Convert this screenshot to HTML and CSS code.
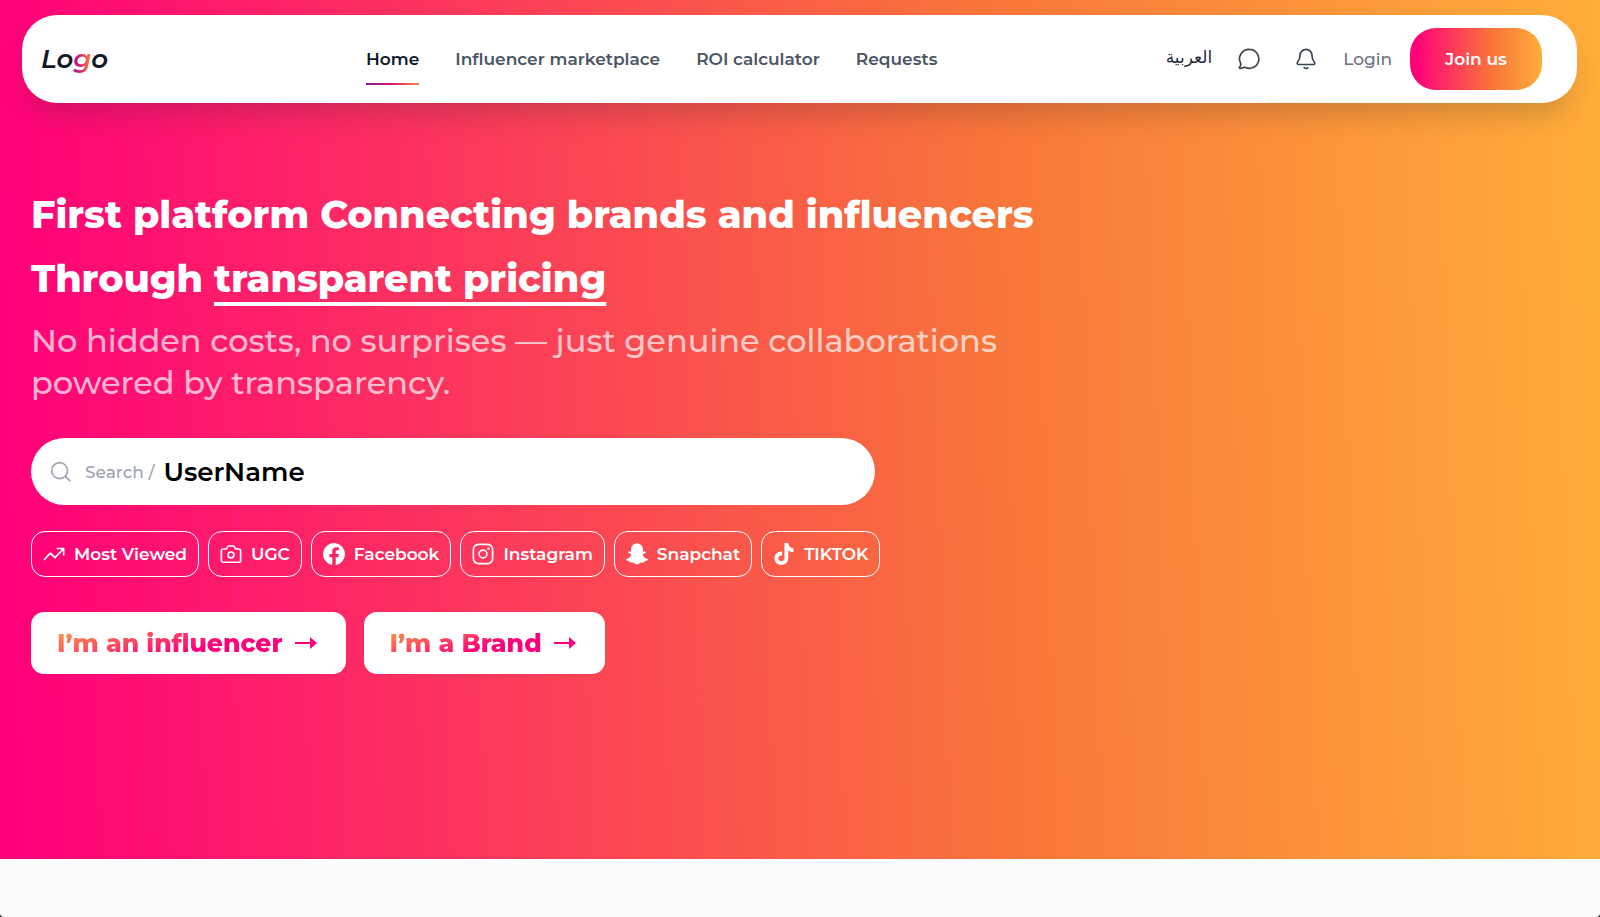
FILE: index.html
```html
<!DOCTYPE html>
<html lang="en">
<head>
<meta charset="utf-8">
<meta name="viewport" content="width=device-width, initial-scale=1">
<title>Influencer marketplace</title>
<link rel="stylesheet" href="styles.css">
</head>
<body>
<div class="page">
  <div class="hero">
    <header class="navbar">
      <a class="logo" href="#">Lo<span class="logo-accent">g</span>o</a>
      <nav class="menu" aria-label="Main">
        <a class="menu-link active" href="#">Home</a>
        <a class="menu-link" href="#">Influencer marketplace</a>
        <a class="menu-link" href="#">ROI calculator</a>
        <a class="menu-link" href="#">Requests</a>
      </nav>
      <div class="actions">
        <a class="language" href="#" lang="ar">العربية</a>
        <button class="icon-button" type="button" aria-label="Messages">
          <svg class="icon" viewBox="0 0 24 24"><path d="M12.500 1.500A10.300 10.300 0 1 1 8.200 21.200c-.5-.2-.9-.2-1.400-.1l-4.100 1.200c-.9.200-1.500-.7-.9-1.400 1.100-1.500 1.500-2.800 1.100-4.300A10.300 10.300 0 0 1 12.500 1.500Z"/></svg>
        </button>
        <button class="icon-button" type="button" aria-label="Notifications">
          <svg class="icon" viewBox="0 0 24 24"><path d="M12 1.500a6.500 6.500 0 0 0-6.500 6.500c0 4-.9 5.400-2.700 7.600-.9 1.100-.3 2.400 1.100 2.400h16.200c1.400 0 2-1.300 1.100-2.400-1.800-2.200-2.700-3.600-2.700-7.600A6.500 6.500 0 0 0 12 1.500ZM10 21.500c.9 1.200 3.100 1.200 4 0"/></svg>
        </button>
        <a class="login" href="#">Login</a>
        <button class="join" type="button">Join us</button>
      </div>
    </header>
    <main class="content">
      <h1 class="headline">First platform Connecting brands and influencers<br>Through <span class="underlined">transparent pricing</span></h1>
      <p class="lead">No hidden costs, no surprises — just genuine collaborations powered by transparency.</p>
      <label class="search">
        <svg class="icon" viewBox="0 0 24 24"><circle cx="10.500" cy="10.500" r="8.700"/><path d="m16.800 16.800 4.700 4.700"/></svg>
        <span class="search-label">Search /</span>
        <input class="search-input" type="text" placeholder="UserName">
      </label>
      <div class="chips">
        <button class="chip" type="button"><svg class="icon" viewBox="0 0 24 24"><path d="m1.500 18 6.500-7 5 5L22 6.500M15.500 6H22.500v7"/></svg>Most Viewed</button>
        <button class="chip" type="button"><svg class="icon" viewBox="0 0 24 24"><path d="M3.500 6.500H6c.8 0 1.300-.4 1.600-1.100l.4-1c.3-.7.800-1.100 1.600-1.100h4.800c.8 0 1.300.4 1.600 1.100l.4 1c.3.7.800 1.100 1.600 1.100h2.500c1.200 0 2 .8 2 2V19c0 1.200-.8 2-2 2h-17c-1.200 0-2-.8-2-2V8.500c0-1.200.8-2 2-2Z"/><circle cx="12" cy="13" r="3.200"/></svg>UGC</button>
        <button class="chip" type="button"><svg class="icon solid" viewBox="0 0 24 24"><path d="M24 12a12 12 0 1 0-13.900 11.900v-8.400H7.100V12h3V9.400c0-3 1.800-4.700 4.600-4.700 1.300 0 2.700.2 2.700.2v3h-1.500c-1.500 0-2 .9-2 1.900V12h3.400l-.6 3.500h-2.800v8.400A12 12 0 0 0 24 12Z"/></svg>Facebook</button>
        <button class="chip" type="button"><svg class="icon" viewBox="0 0 24 24"><rect x="1.500" y="1.500" width="21" height="21" rx="5.500"/><circle cx="12" cy="12" r="4.300"/><circle cx="18" cy="6" r=".5"/></svg>Instagram</button>
        <button class="chip" type="button"><svg class="icon solid" viewBox="0 0 24 24"><path d="M12 .5c3.900 0 6.500 2.700 6.500 6.600v2.400c.9.200 1.900-.5 2.600-.1.900.5.700 1.300-.2 1.700l-2.200 1c-.5.300-.4.800-.1 1.400.9 2.100 2.500 3.300 4.900 4 .7.300.7.900.1 1.300-.9.600-2 .8-3.200 1-.5.200-.3 1.400-1 1.500-1 .2-2.100-.4-3.300 0-1.500.6-2.200 2.200-4.100 2.200s-2.600-1.600-4.100-2.200c-1.200-.4-2.300.2-3.300 0-.7-.1-.5-1.300-1-1.500-1.200-.2-2.300-.4-3.200-1-.6-.4-.6-1 .1-1.300 2.400-.7 4-1.900 4.900-4 .3-.6.400-1.100-.1-1.400l-2.200-1c-.9-.4-1.100-1.200-.2-1.700.7-.4 1.700.3 2.600.1V7.100C5.500 3.200 8.100.5 12 .5Z"/></svg>Snapchat</button>
        <button class="chip" type="button"><svg class="icon solid" viewBox="0 0 24 24"><path d="M12.500 0h4.100c.2 3.300 2.400 5.600 5.700 5.900V10c-2.100 0-4-.7-5.600-1.800v7.900c0 4.700-3.300 7.900-7.700 7.900-4.200 0-7.400-3.200-7.400-7.300 0-4.500 3.700-7.900 8.400-7.300v4.300c-2.300-.6-4.200.9-4.200 3 0 1.800 1.400 3.200 3.200 3.200 2 0 3.500-1.400 3.500-3.700Z"/></svg>TIKTOK</button>
      </div>
      <div class="roles">
        <button class="role" type="button"><span class="role-text">I’m an influencer</span><svg class="arrow" viewBox="0 0 22 14"><path d="M0 6h15V1l7 6-7 6V8H0Z"/></svg></button>
        <button class="role" type="button"><span class="role-text">I’m a Brand</span><svg class="arrow" viewBox="0 0 22 14"><path d="M0 6h15V1l7 6-7 6V8H0Z"/></svg></button>
      </div>
    </main>
  </div>
</div>
</body>
</html>
```
FILE: styles.css
```css
* { box-sizing: border-box; }
html { background: #2b2b2b; }
body {
  margin: 0;
  font-family: Montserrat, Inter, "Open Sans", sans-serif;
  font-size: 17px;
  color: #111827;
}
a { color: inherit; text-decoration: none; }
button { font: inherit; color: inherit; border: 0; cursor: pointer; }
.page {
  min-height: 100vh;
  background: #f9fbfd;
  border-radius: 0 0 4px 4px;
  overflow: hidden;
}
.hero {
  padding: 15px 23px 185px 22px;
  background: linear-gradient(88deg, #ff007a 1%, #f8753a 62%, #ffae3a 100%);
}
.icon {
  width: 22px;
  height: 22px;
  flex: none;
  fill: none;
  stroke: currentColor;
  stroke-width: 1.8;
  stroke-linecap: round;
  stroke-linejoin: round;
}
.icon.solid { fill: currentColor; stroke: none; }

.navbar {
  display: grid;
  grid-template-columns: 325px 1fr auto;
  align-items: center;
  height: 88px;
  padding: 0 35px 0 19px;
  background: #fff;
  border-radius: 35px;
  box-shadow: 0 18px 28px -8px rgba(40, 40, 40, .22);
}
.logo { font-size: 26px; font-weight: 600; font-style: italic; justify-self: start; }
.logo-accent {
  background: linear-gradient(90deg, #a0128c, #e0206c 45%, #f98b3a);
  background-clip: text;
  color: transparent;
}
.menu { display: flex; gap: 36px; }
.menu-link { padding: 14px 0; line-height: 24px; font-weight: 600; color: #4b5563; white-space: nowrap; }
.menu-link.active {
  color: #111827;
  background: linear-gradient(90deg, #86198f, #d91c74 50%, #f98b3a) bottom / 100% 2px no-repeat;
}
.actions { display: flex; align-items: center; }
.language { font-family: "DejaVu Sans", sans-serif; font-size: 17px; color: #1f2937; padding-bottom: 4px; }
.icon-button { display: flex; padding: 0; margin-left: 26px; background: none; color: #374151; }
.icon-button + .icon-button { margin-left: 35px; }
.login { margin-left: 26px; font-weight: 500; color: #6b7280; }
.join {
  width: 132px;
  height: 62px;
  margin-left: 18px;
  border-radius: 26px;
  background: linear-gradient(90deg, #ff007a 4%, #f8753a 62%, #ffae3a 100%);
  color: #fff;
  font-weight: 600;
}

.content { padding: 80px 9px 0; color: #fff; }
.headline { margin: 0; font-size: 38px; line-height: 64px; font-weight: 800; }
.underlined { text-decoration: underline; text-decoration-thickness: 4px; text-underline-offset: 10px; text-decoration-skip-ink: none; }
.lead { max-width: 1010px; margin: 9px 0 0; font-size: 32px; line-height: 42px; font-weight: 500; color: rgba(255, 255, 255, .7); }
.search {
  display: flex;
  align-items: center;
  max-width: 844px;
  height: 67px;
  margin-top: 34px;
  padding: 0 19px;
  border-radius: 34px;
  background: #fff;
  color: #9ca3af;
}
.search-label { margin: 0 9px 0 13px; font-weight: 500; white-space: nowrap; }
.search-input { flex: 1; min-width: 0; padding: 0; border: 0; outline: 0; background: none; font: inherit; font-size: 26px; font-weight: 600; color: #000; }
.search-input::placeholder { color: #000; opacity: 1; }
.chips { display: flex; flex-wrap: wrap; gap: 9px; margin-top: 26px; }
.chip {
  display: flex;
  align-items: center;
  gap: 9px;
  height: 46px;
  padding: 0 11px;
  border: 1px solid #fff;
  border-radius: 14px;
  background: none;
  font-weight: 600;
}
.roles { display: flex; flex-wrap: wrap; gap: 18px; margin-top: 35px; }
.role {
  display: flex;
  align-items: center;
  gap: 12px;
  height: 62px;
  padding: 0 29px 0 26px;
  border-radius: 13px;
  background: #fff;
  font-size: 25px;
  font-weight: 800;
}
.role-text {
  background: linear-gradient(165deg, #f98b4a 10%, #ff007a 65%);
  background-clip: text;
  color: transparent;
}
.arrow { width: 22px; height: 14px; fill: #ff007a; }
```
